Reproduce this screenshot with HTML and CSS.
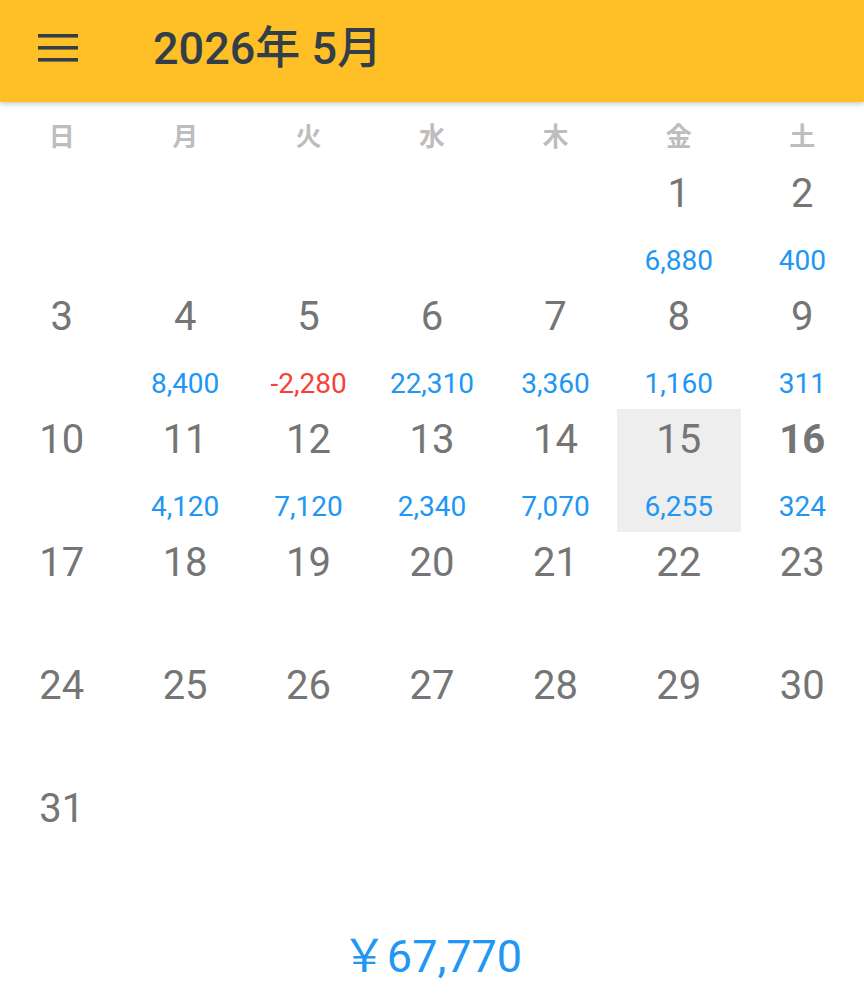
FILE: index.html
```html
<!DOCTYPE html>
<html lang="ja">
<head>
<meta charset="utf-8">
<title>2026年 5月</title>
<link rel="stylesheet" href="styles.css">
</head>
<body>
<header class="appbar">
  <svg class="menu" width="40" height="30" viewBox="0 0 40 30" aria-hidden="true">
    <rect x="0" y="1" width="40" height="3.6" fill="#323e48"/>
    <rect x="0" y="13" width="40" height="3.6" fill="#323e48"/>
    <rect x="0" y="25" width="40" height="3.6" fill="#323e48"/>
  </svg>
  <h1 class="title">2026年 5月</h1>
</header>
<main>
  <div class="weekdays">
    <span>日</span><span>月</span><span>火</span><span>水</span><span>木</span><span>金</span><span>土</span>
  </div>
  <div class="grid">
    <div class="cell"></div><div class="cell"></div><div class="cell"></div><div class="cell"></div><div class="cell"></div>
    <div class="cell"><span class="day">1</span><span class="amt">6,880</span></div>
    <div class="cell"><span class="day">2</span><span class="amt">400</span></div>

    <div class="cell"><span class="day">3</span></div>
    <div class="cell"><span class="day">4</span><span class="amt">8,400</span></div>
    <div class="cell"><span class="day">5</span><span class="amt neg">-2,280</span></div>
    <div class="cell"><span class="day">6</span><span class="amt">22,310</span></div>
    <div class="cell"><span class="day">7</span><span class="amt">3,360</span></div>
    <div class="cell"><span class="day">8</span><span class="amt">1,160</span></div>
    <div class="cell"><span class="day">9</span><span class="amt">311</span></div>

    <div class="cell"><span class="day">10</span></div>
    <div class="cell"><span class="day">11</span><span class="amt">4,120</span></div>
    <div class="cell"><span class="day">12</span><span class="amt">7,120</span></div>
    <div class="cell"><span class="day">13</span><span class="amt">2,340</span></div>
    <div class="cell"><span class="day">14</span><span class="amt">7,070</span></div>
    <div class="cell selected"><span class="day">15</span><span class="amt">6,255</span></div>
    <div class="cell"><span class="day today">16</span><span class="amt">324</span></div>

    <div class="cell"><span class="day">17</span></div>
    <div class="cell"><span class="day">18</span></div>
    <div class="cell"><span class="day">19</span></div>
    <div class="cell"><span class="day">20</span></div>
    <div class="cell"><span class="day">21</span></div>
    <div class="cell"><span class="day">22</span></div>
    <div class="cell"><span class="day">23</span></div>

    <div class="cell"><span class="day">24</span></div>
    <div class="cell"><span class="day">25</span></div>
    <div class="cell"><span class="day">26</span></div>
    <div class="cell"><span class="day">27</span></div>
    <div class="cell"><span class="day">28</span></div>
    <div class="cell"><span class="day">29</span></div>
    <div class="cell"><span class="day">30</span></div>

    <div class="cell"><span class="day">31</span></div>
  </div>
  <div class="total">￥67,770</div>
</main>
</body>
</html>
```
FILE: styles.css
```css
* { box-sizing: border-box; }
html, body { margin: 0; padding: 0; background: #fff; }
body {
  width: 864px;
  height: 997px;
  overflow: hidden;
  font-family: Roboto, "Noto Sans CJK JP", sans-serif;
}
.appbar {
  height: 102px;
  background: #ffbf27;
  display: flex;
  align-items: center;
  box-shadow: 0 2px 5px rgba(0,0,0,0.22);
  position: relative;
  z-index: 1;
}
.menu {
  margin-left: 38px;
  margin-top: -6px;
  flex: none;
}
.title {
  margin: -6px 0 0 75px;
  font-size: 45px;
  font-weight: 500;
  color: #323e48;
  line-height: 1;
}
.weekdays {
  display: grid;
  grid-template-columns: repeat(7, 1fr);
  height: 61px;
  padding-top: 18px;
}
.weekdays span {
  text-align: center;
  font-family: "Noto Sans CJK JP", sans-serif;
  font-weight: 700;
  font-size: 26px;
  line-height: 30px;
  color: #bdbdbd;
}
.grid {
  display: grid;
  grid-template-columns: repeat(7, 1fr);
  grid-auto-rows: 123px;
}
.cell {
  display: flex;
  flex-direction: column;
  align-items: center;
}
.cell.selected { background: #eeeeee; }
.day {
  font-size: 40px;
  line-height: 62px;
  color: #757575;
}
.day.today { font-weight: 700; }
.amt {
  margin-top: 20px;
  font-size: 28px;
  line-height: 32px;
  color: #2196f3;
}
.amt.neg { color: #f44336; }
.total {
  margin-top: 28px;
  text-align: center;
  font-size: 45px;
  line-height: 56px;
  color: #2196f3;
}
```
